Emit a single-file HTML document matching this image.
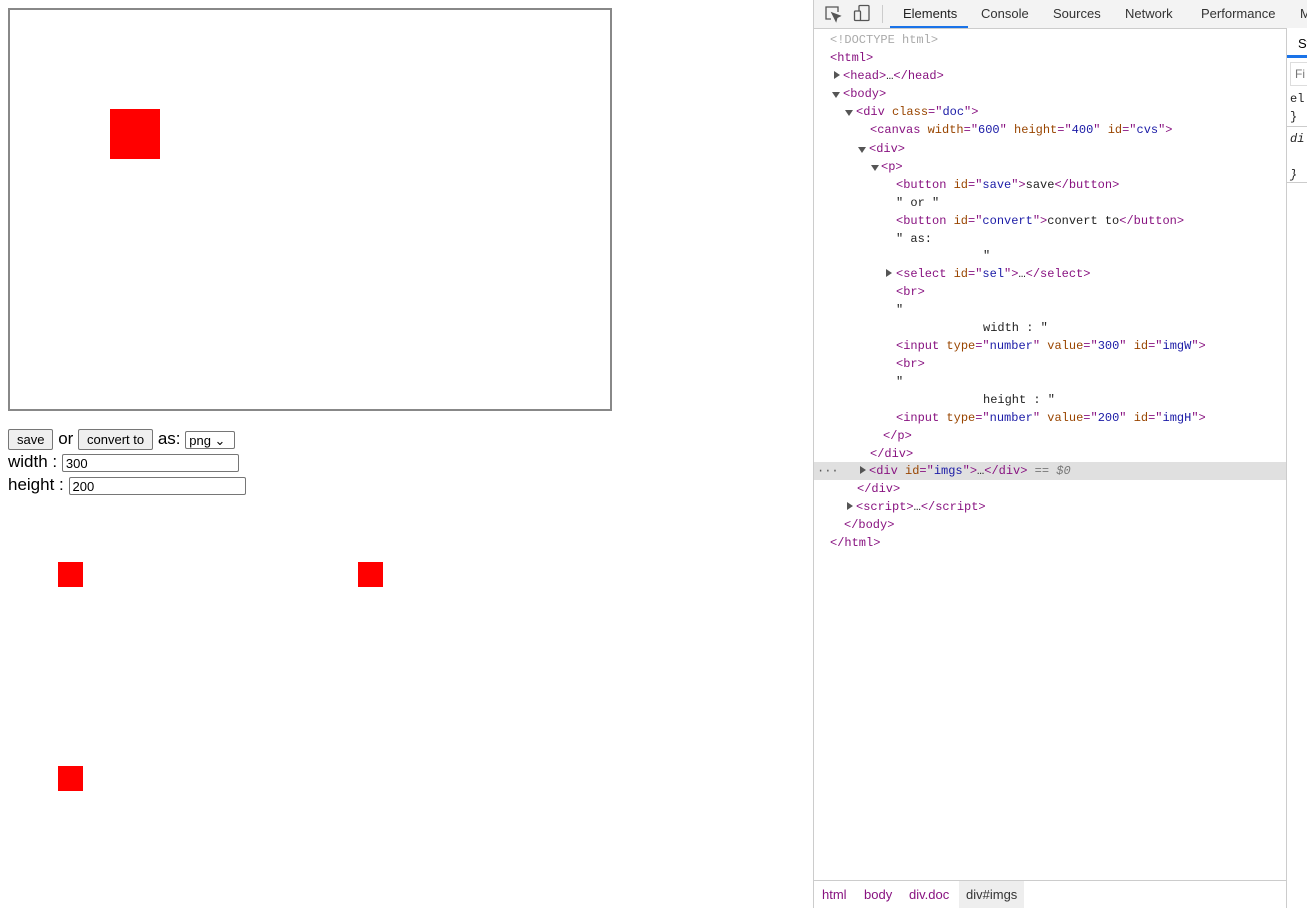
<!DOCTYPE html>
<html><head><style>
body{margin:0;width:1307px;height:908px;overflow:hidden;background:#fff;font-family:"Liberation Sans",sans-serif;position:relative}
.cv{position:absolute;left:8px;top:8px;width:600px;height:399px;border:2px solid #888;box-sizing:content-box}
.sq{position:absolute;background:#f00}
.ctl{position:absolute;left:8px;font-size:17px;color:#000;white-space:nowrap}
.btn{display:inline-block;font-size:13px;border:1px solid #767676;background:#efefef;border-radius:2px;padding:1px 8px;height:17px;line-height:17px;vertical-align:middle}
.inp{display:inline-block;border:1px solid #767676;border-radius:2px;font-size:13px;height:18px;line-height:18px;padding:0 3px;vertical-align:middle;box-sizing:border-box}
.dt{position:absolute;left:813px;top:0;width:494px;height:908px;border-left:1px solid #ccc;background:#fff}
.tb{position:absolute;left:0;top:0;width:494px;height:28px;background:#f3f3f3;border-bottom:1px solid #ccc;font-size:13px;color:#333}
.tab{position:absolute;top:6px}
.ln{position:absolute;font-family:"Liberation Mono",monospace;font-size:12px;line-height:18px;white-space:pre;color:#222}
.t{color:#881280}.a{color:#994500}.v{color:#1a1aa6}.g{color:#aaa}
.tri{position:absolute;width:0;height:0;border-left:4px solid transparent;border-right:4px solid transparent;border-top:6px solid #555}
.trr{position:absolute;width:0;height:0;border-top:4px solid transparent;border-bottom:4px solid transparent;border-left:6px solid #555}
</style></head><body>
<div class="cv"></div>
<div class="sq" style="left:110px;top:109px;width:50px;height:50px"></div>
<div class="ctl" style="top:429px"><span class="btn">save</span> or <span class="btn">convert to</span> as: <span class="inp" style="width:50px;font-size:13px">png &#8964;</span></div>
<div class="ctl" style="top:452px">width : <span class="inp" style="width:177px">300</span></div>
<div class="ctl" style="top:475px">height : <span class="inp" style="width:177px">200</span></div>
<div class="sq" style="left:58px;top:562px;width:25px;height:25px"></div>
<div class="sq" style="left:358px;top:562px;width:25px;height:25px"></div>
<div class="sq" style="left:58px;top:766px;width:25px;height:25px"></div>
<div class="dt">
<div class="tb">
<svg style="position:absolute;left:10px;top:5px" width="18" height="18" viewBox="0 0 18 18" fill="none" stroke="#555" stroke-width="1.3"><path d="M7 14H2V2h12v5"/><path d="M8 8l8 3-3 1.5L12 16z" fill="#555"/></svg>
<svg style="position:absolute;left:39px;top:4px" width="18" height="18" viewBox="0 0 18 18" fill="none" stroke="#555" stroke-width="1.3"><rect x="6" y="1.5" width="10" height="15" rx="1"/><rect x="1.5" y="7" width="6" height="9.5" rx="1" fill="#f3f3f3"/></svg>
<div style="position:absolute;left:68px;top:5px;width:1px;height:18px;background:#ccc"></div>
<div style="position:absolute;left:76px;top:26px;width:78px;height:2px;background:#1a73e8"></div>
<span class="tab" style="left:89px;color:#222">Elements</span>
<span class="tab" style="left:167px">Console</span>
<span class="tab" style="left:239px">Sources</span>
<span class="tab" style="left:311px">Network</span>
<span class="tab" style="left:387px">Performance</span>
<span class="tab" style="left:486px">M</span>
</div>
<div style="position:absolute;left:0;top:462px;width:472px;height:18px;background:#e0e0e0"></div>
<div style="position:absolute;left:472px;top:28px;width:22px;height:880px;border-left:1px solid #ccc;background:#fff"></div>
<div style="position:absolute;left:473px;top:55px;width:21px;height:3px;background:#1a73e8"></div>
<div style="position:absolute;left:484px;top:36px;font-size:13px">St</div>
<div style="position:absolute;left:476px;top:62px;width:18px;height:22px;border:1px solid #ddd;font-size:12px;color:#777;line-height:22px;padding-left:4px">Fi</div>
<div class="ln" style="left:476px;top:90px">el<br>}</div>
<div style="position:absolute;left:473px;top:126px;width:21px;height:1px;background:#ccc"></div>
<div class="ln" style="left:476px;top:130px;font-style:italic">di<br><br>}</div>
<div style="position:absolute;left:473px;top:182px;width:21px;height:1px;background:#ccc"></div>
<div style="position:absolute;left:0;top:880px;width:472px;height:28px;border-top:1px solid #ccc;background:#fff;font-size:13px;color:#881280;line-height:27px">
<span style="position:absolute;left:8px">html</span><span style="position:absolute;left:50px">body</span><span style="position:absolute;left:95px">div.doc</span><span style="position:absolute;left:145px;padding:0 7px;background:#eee;color:#333">div#imgs</span></div>
<div class="ln g" style="left:16px;top:31px">&lt;!DOCTYPE html&gt;</div>
<div class="ln t" style="left:16px;top:49px">&lt;html&gt;</div>
<div class="trr" style="left:20px;top:71px"></div><div class="ln" style="left:29px;top:67px"><span class="t">&lt;head&gt;</span>…<span class="t">&lt;/head&gt;</span></div>
<div class="tri" style="left:18px;top:92px"></div><div class="ln t" style="left:29px;top:85px">&lt;body&gt;</div>
<div class="tri" style="left:31px;top:110px"></div><div class="ln" style="left:42px;top:103px"><span class="t">&lt;div </span><span class="a">class</span><span class="t">="</span><span class="v">doc</span><span class="t">"&gt;</span></div>
<div class="ln" style="left:56px;top:121px"><span class="t">&lt;canvas </span><span class="a">width</span><span class="t">="</span><span class="v">600</span><span class="t">" </span><span class="a">height</span><span class="t">="</span><span class="v">400</span><span class="t">" </span><span class="a">id</span><span class="t">="</span><span class="v">cvs</span><span class="t">"&gt;</span></div>
<div class="tri" style="left:44px;top:147px"></div><div class="ln t" style="left:55px;top:140px">&lt;div&gt;</div>
<div class="tri" style="left:57px;top:165px"></div><div class="ln t" style="left:67px;top:158px">&lt;p&gt;</div>
<div class="ln" style="left:82px;top:176px"><span class="t">&lt;button </span><span class="a">id</span><span class="t">="</span><span class="v">save</span><span class="t">"&gt;</span>save<span class="t">&lt;/button&gt;</span></div>
<div class="ln" style="left:82px;top:194px">" or "</div>
<div class="ln" style="left:82px;top:212px"><span class="t">&lt;button </span><span class="a">id</span><span class="t">="</span><span class="v">convert</span><span class="t">"&gt;</span>convert to<span class="t">&lt;/button&gt;</span></div>
<div class="ln" style="left:82px;top:230px">" as:</div>
<div class="ln" style="left:169px;top:247px">"</div>
<div class="trr" style="left:72px;top:269px"></div><div class="ln" style="left:82px;top:265px"><span class="t">&lt;select </span><span class="a">id</span><span class="t">="</span><span class="v">sel</span><span class="t">"&gt;</span>…<span class="t">&lt;/select&gt;</span></div>
<div class="ln t" style="left:82px;top:283px">&lt;br&gt;</div>
<div class="ln" style="left:82px;top:301px">"</div>
<div class="ln" style="left:169px;top:319px">width : "</div>
<div class="ln" style="left:82px;top:337px"><span class="t">&lt;input </span><span class="a">type</span><span class="t">="</span><span class="v">number</span><span class="t">" </span><span class="a">value</span><span class="t">="</span><span class="v">300</span><span class="t">" </span><span class="a">id</span><span class="t">="</span><span class="v">imgW</span><span class="t">"&gt;</span></div>
<div class="ln t" style="left:82px;top:355px">&lt;br&gt;</div>
<div class="ln" style="left:82px;top:373px">"</div>
<div class="ln" style="left:169px;top:391px">height : "</div>
<div class="ln" style="left:82px;top:409px"><span class="t">&lt;input </span><span class="a">type</span><span class="t">="</span><span class="v">number</span><span class="t">" </span><span class="a">value</span><span class="t">="</span><span class="v">200</span><span class="t">" </span><span class="a">id</span><span class="t">="</span><span class="v">imgH</span><span class="t">"&gt;</span></div>
<div class="ln t" style="left:69px;top:427px">&lt;/p&gt;</div>
<div class="ln t" style="left:56px;top:445px">&lt;/div&gt;</div>
<div class="ln" style="left:3px;top:462px;color:#555">···</div>
<div class="trr" style="left:46px;top:466px"></div><div class="ln" style="left:55px;top:462px"><span class="t">&lt;div </span><span class="a">id</span><span class="t">="</span><span class="v">imgs</span><span class="t">"&gt;</span>…<span class="t">&lt;/div&gt;</span><span style="color:#777;font-style:italic"> == $0</span></div>
<div class="ln t" style="left:43px;top:480px">&lt;/div&gt;</div>
<div class="trr" style="left:33px;top:502px"></div><div class="ln" style="left:42px;top:498px"><span class="t">&lt;script&gt;</span>…<span class="t">&lt;/script&gt;</span></div>
<div class="ln t" style="left:30px;top:516px">&lt;/body&gt;</div>
<div class="ln t" style="left:16px;top:534px">&lt;/html&gt;</div>
</div>
</body></html>
